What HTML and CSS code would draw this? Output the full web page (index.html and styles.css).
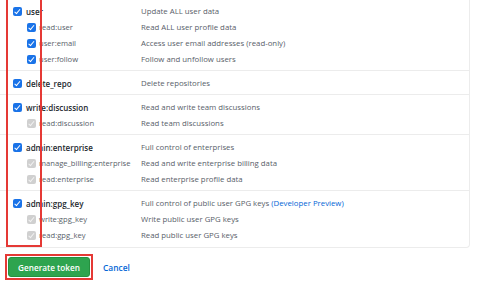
FILE: index.html
```html
<!DOCTYPE html>
<html>
<head>
<meta charset="utf-8">
<link rel="stylesheet" href="styles.css">
</head>
<body>
<div class="page">
  <div class="scopes">
    <div class="group">
      <div class="row parent"><div class="name"><span class="cb on"></span><span>user</span></div><div class="desc">Update ALL user data</div></div>
      <div class="row child"><div class="name"><span class="cb on"></span><span>read:user</span></div><div class="desc">Read ALL user profile data</div></div>
      <div class="row child"><div class="name"><span class="cb on"></span><span>user:email</span></div><div class="desc">Access user email addresses (read-only)</div></div>
      <div class="row child"><div class="name"><span class="cb on"></span><span>user:follow</span></div><div class="desc">Follow and unfollow users</div></div>
    </div>
    <div class="group">
      <div class="row parent"><div class="name"><span class="cb on"></span><span>delete_repo</span></div><div class="desc">Delete repositories</div></div>
    </div>
    <div class="group">
      <div class="row parent"><div class="name"><span class="cb on"></span><span>write:discussion</span></div><div class="desc">Read and write team discussions</div></div>
      <div class="row child"><div class="name"><span class="cb off"></span><span>read:discussion</span></div><div class="desc">Read team discussions</div></div>
    </div>
    <div class="group">
      <div class="row parent"><div class="name"><span class="cb on"></span><span>admin:enterprise</span></div><div class="desc">Full control of enterprises</div></div>
      <div class="row child"><div class="name"><span class="cb off"></span><span>manage_billing:enterprise</span></div><div class="desc">Read and write enterprise billing data</div></div>
      <div class="row child"><div class="name"><span class="cb off"></span><span>read:enterprise</span></div><div class="desc">Read enterprise profile data</div></div>
    </div>
    <div class="group">
      <div class="row parent"><div class="name"><span class="cb on"></span><span>admin:gpg_key</span></div><div class="desc">Full control of public user GPG keys <a class="link">(Developer Preview)</a></div></div>
      <div class="row child"><div class="name"><span class="cb off"></span><span>write:gpg_key</span></div><div class="desc">Write public user GPG keys</div></div>
      <div class="row child"><div class="name"><span class="cb off"></span><span>read:gpg_key</span></div><div class="desc">Read public user GPG keys</div></div>
    </div>
  </div>
  <div class="actions">
    <div class="btn-mark"><button class="btn">Generate token</button></div>
    <a class="cancel">Cancel</a>
  </div>
  <div class="col-mark"></div>
</div>
</body>
</html>
```

FILE: styles.css
```css
* { box-sizing: border-box; }
html, body { margin: 0; padding: 0; background: #fff; }
body {
  font-family: "Open Sans", "Noto Sans", Arial, sans-serif;
  font-size: 7.8px;
  color: #24292e;
  width: 480px;
  height: 292px;
  overflow: hidden;
}
.page { position: relative; }
.scopes {
  margin-top: -1px;
  width: 470px;
  border: 1px solid #ececec;
  border-left: none;
  border-top: none;
  border-radius: 0 0 4px 0;
}
.group {
  padding: 4px 0 3px;
  border-bottom: 1px solid #ececec;
}
.group:last-child { border-bottom: none; padding-bottom: 4px; }
.row {
  display: flex;
  align-items: center;
  height: 16px;
}
.name {
  display: flex;
  align-items: center;
  gap: 4px;
  width: 141px;
  padding-left: 13px;
  white-space: nowrap;
  font-size: 8px;
}
.child .name { padding-left: 27px; gap: 3px; color: #586069; font-size: 7.6px; }
.parent .name { font-weight: 600; }
.desc { color: #586069; white-space: nowrap; }
.link { color: #0366d6; }
.cb {
  flex: none;
  width: 9px;
  height: 9px;
  border-radius: 2px;
  position: relative;
}
.cb::after {
  content: "";
  position: absolute;
  left: 3px;
  top: 1px;
  width: 2px;
  height: 4.5px;
  border: solid #fff;
  border-width: 0 1.5px 1.5px 0;
  transform: rotate(40deg);
}
.cb.on { background: #1a73e8; }
.cb.off { background: #d0d0d0; }
.cb.off::after { border-color: #f2f2f2; }
.actions {
  display: flex;
  align-items: center;
  gap: 10px;
  padding: 6px 0 0 5px;
}
.btn-mark {
  border: 2px solid #e53935;
  padding: 1px;
}
.btn {
  display: block;
  width: 82px;
  height: 20px;
  border: 1px solid #26903f;
  border-radius: 3px;
  background: #2ea44f;
  color: #fff;
  font-family: inherit;
  font-size: 8.2px;
  font-weight: 600;
  padding: 0;
}
.cancel { color: #0366d6; font-weight: 600; font-size: 8.4px; }
.col-mark {
  position: absolute;
  left: 6px;
  top: -10px;
  width: 36px;
  height: 258px;
  border: 2px solid #e53935;
}
```
